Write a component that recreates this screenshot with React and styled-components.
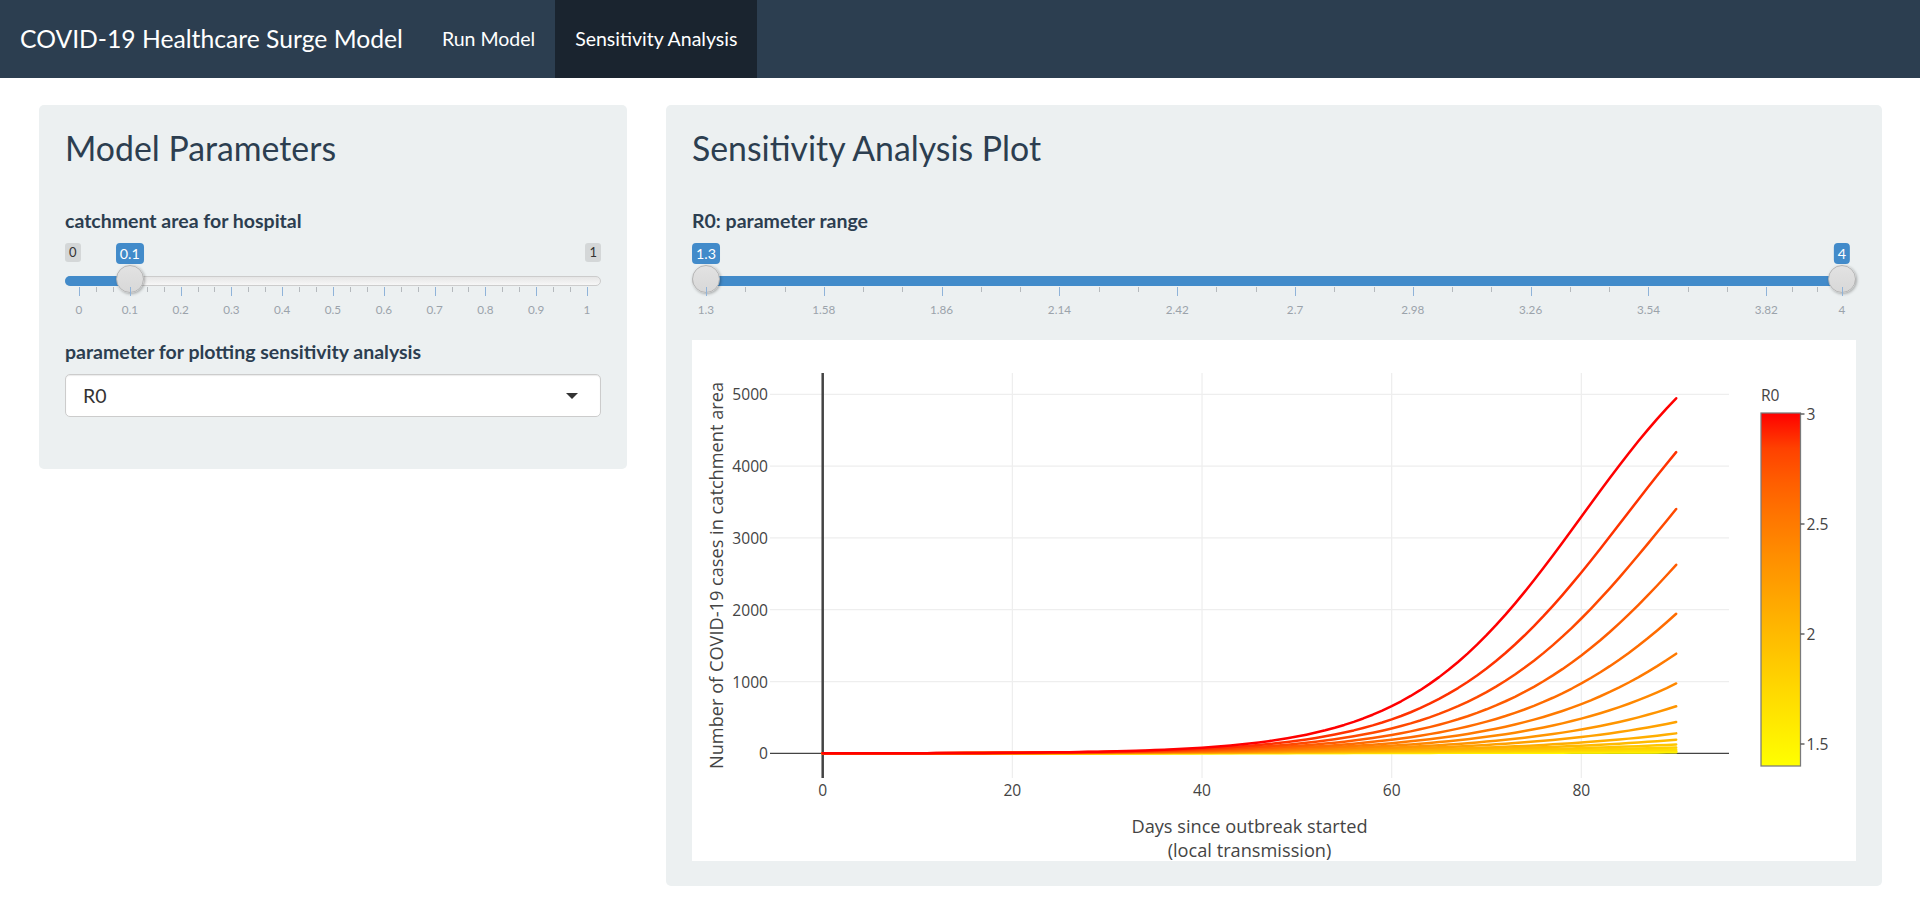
import React from 'react';
import styled, { createGlobalStyle } from 'styled-components';

const GlobalStyle = createGlobalStyle`
  html, body { margin: 0; padding: 0; background: #ffffff; }
  body { font-family: Lato, "Open Sans", "Liberation Sans", sans-serif; color: #2c3e50; font-size: 19.5px; }
  * { box-sizing: border-box; }
`;

/* ---------- colour helpers (CIELAB interpolation like R's colour_ramp) ---------- */
const toLin = (c) => { c /= 255; return c <= 0.04045 ? c / 12.92 : Math.pow((c + 0.055) / 1.055, 2.4); };
const toSrgb = (c) => {
  const v = c <= 0.0031308 ? 12.92 * c : 1.055 * Math.pow(c, 1 / 2.4) - 0.055;
  return Math.round(Math.max(0, Math.min(1, v)) * 255);
};
function rgb2lab([r, g, b]) {
  const R = toLin(r), G = toLin(g), B = toLin(b);
  const X = (0.4124 * R + 0.3576 * G + 0.1805 * B) / 0.95047;
  const Y = 0.2126 * R + 0.7152 * G + 0.0722 * B;
  const Z = (0.0193 * R + 0.1192 * G + 0.9505 * B) / 1.08883;
  const f = (t) => (t > 0.008856 ? Math.cbrt(t) : 7.787 * t + 16 / 116);
  const fx = f(X), fy = f(Y), fz = f(Z);
  return [116 * fy - 16, 500 * (fx - fy), 200 * (fy - fz)];
}
function lab2rgb([L, a, b]) {
  const fy = (L + 16) / 116, fx = fy + a / 500, fz = fy - b / 200;
  const fi = (t) => (t * t * t > 0.008856 ? t * t * t : (t - 16 / 116) / 7.787);
  const X = fi(fx) * 0.95047, Y = fi(fy), Z = fi(fz) * 1.08883;
  const R = 3.2406 * X - 1.5372 * Y - 0.4986 * Z;
  const G = -0.9689 * X + 1.8758 * Y + 0.0415 * Z;
  const B = 0.0557 * X - 0.204 * Y + 1.057 * Z;
  return `rgb(${toSrgb(R)},${toSrgb(G)},${toSrgb(B)})`;
}
const LAB_Y = rgb2lab([255, 255, 0]);
const LAB_R = rgb2lab([255, 0, 0]);
const colorAt = (f) => lab2rgb(LAB_Y.map((c, i) => c + (LAB_R[i] - c) * f));

/* ---------- navbar ---------- */
const Navbar = styled.nav`
  height: 78px;
  background: #2c3e50;
  display: flex;
  align-items: stretch;
`;
const Brand = styled.div`
  padding: 0 19px 0 20px;
  font-size: 24.7px;
  line-height: 78px;
  color: #ffffff;
`;
const NavLink = styled.a`
  display: block;
  padding: 0 20px;
  font-size: 19.5px;
  line-height: 78px;
  color: #ffffff;
  text-decoration: none;
  background: ${(p) => (p.$active ? '#1a242f' : 'transparent')};
`;

/* ---------- layout ---------- */
const Main = styled.main`
  display: grid;
  grid-template-columns: 588px 1216px;
  column-gap: 39px;
  padding: 27px 0 26px 39px;
  align-items: start;
`;
const Well = styled.section`
  display: flex;
  flex-direction: column;
  background: #ecf0f1;
  border-radius: 5px;
  padding: 25px 26px ${(p) => p.$pb}px;
`;
const Title = styled.h2`
  margin: 0 0 40px;
  font-size: 33.8px;
  line-height: 37px;
  font-weight: 400;
  color: #2c3e50;
`;
const Label = styled.div`
  font-weight: 700;
  font-size: 19.5px;
  line-height: 27px;
  color: #2c3e50;
  margin-bottom: ${(p) => p.$mb || 0}px;
`;

/* ---------- range slider ---------- */
const SliderWrap = styled.div`
  display: flex;
  flex-direction: column;
  padding-top: 9px;
  margin-bottom: ${(p) => p.$mb}px;
`;
const LabelRow = styled.div`
  position: relative;
  height: 21px;
  display: flex;
  justify-content: space-between;
  align-items: flex-start;
`;
const TrackRow = styled.div`
  position: relative;
  height: 22px;
  padding-top: 12px;
`;
const GridRow = styled.div`
  position: relative;
  height: 34px;
`;
const Track = styled.div`
  height: 10px;
  border: 1px solid #cccccc;
  border-radius: 16px;
  background: linear-gradient(to bottom, #dedede -50%, #ffffff 150%);
`;
const Bar = styled.div`
  position: absolute;
  top: 12px;
  height: 10px;
  background: #428bca;
  border-radius: ${(p) => (p.$fromEdge ? '16px 0 0 16px' : '0')};
`;
const Handle = styled.div`
  position: absolute;
  top: 1px;
  width: 28px;
  height: 28px;
  margin-left: -14px;
  border-radius: 50%;
  background: linear-gradient(to bottom, #e2e2e2, #d8d8d8);
  border: 1px solid #b4b4b4;
  box-shadow: 1px 1px 3px rgba(0, 0, 0, 0.3);
`;
const EdgeLabel = styled.span`
  height: 19px;
  padding: 0 4px;
  font-size: 13px;
  line-height: 19px;
  color: #333333;
  background: rgba(0, 0, 0, 0.1);
  border-radius: 3px;
`;
const ValueLabel = styled.span`
  position: absolute;
  top: 0;
  height: 21px;
  padding: 0 4px;
  transform: translateX(-50%);
  font-size: 14.3px;
  line-height: 21px;
  color: #ffffff;
  background: #428bca;
  border-radius: 4px;
`;
const Tick = styled.span`
  position: absolute;
  top: 1px;
  width: 1px;
  height: ${(p) => (p.$small ? 5 : 9)}px;
  background: ${(p) => (p.$small ? '#b5b9bd' : '#8fb3d9')};
`;
const TickText = styled.span`
  position: absolute;
  top: 16px;
  transform: translateX(-50%);
  font-size: 11.7px;
  line-height: 14px;
  color: #9ba3ab;
  white-space: nowrap;
`;

const pos = (f) => `calc(14px + (100% - 28px) * ${f})`;

function RangeSlider({ min, max, majors, format, values, showEdges, mb }) {
  const fr = (v) => (v - min) / (max - min);
  const minors = [];
  for (let i = 0; i < majors.length - 1; i++) {
    const a = majors[i], b = majors[i + 1];
    minors.push(a + (b - a) / 3, a + (2 * (b - a)) / 3);
  }
  const single = values.length === 1;
  return (
    <SliderWrap $mb={mb}>
      <LabelRow>
        {showEdges && <EdgeLabel>{format(min)}</EdgeLabel>}
        {showEdges && <EdgeLabel>{format(max)}</EdgeLabel>}
        {values.map((v, i) => (
          <ValueLabel key={'v' + i} style={{ left: pos(fr(v)) }}>{format(v)}</ValueLabel>
        ))}
      </LabelRow>
      <TrackRow>
        <Track />
        {single ? (
          <Bar $fromEdge style={{ left: 0, width: pos(fr(values[0])) }} />
        ) : (
          <Bar style={{ left: pos(fr(values[0])), right: `calc(14px + (100% - 28px) * ${1 - fr(values[1])})` }} />
        )}
        {values.map((v, i) => (
          <Handle key={'h' + i} style={{ left: pos(fr(v)) }} />
        ))}
      </TrackRow>
      <GridRow>
        {minors.map((v, i) => (
          <Tick key={'m' + i} $small style={{ left: pos(fr(v)) }} />
        ))}
        {majors.map((v, i) => (
          <Tick key={'M' + i} style={{ left: pos(fr(v)) }} />
        ))}
        {majors.map((v, i) => (
          <TickText key={'t' + i} style={{ left: pos(fr(v)) }}>{format(v)}</TickText>
        ))}
      </GridRow>
    </SliderWrap>
  );
}

/* ---------- select ---------- */
const SelectBox = styled.div`
  height: 43px;
  background: #ffffff;
  border: 1px solid #cccccc;
  border-radius: 5px;
  box-shadow: inset 0 1px 1px rgba(0, 0, 0, 0.08);
  display: flex;
  align-items: center;
  justify-content: space-between;
  padding: 0 22px 0 17px;
  font-size: 19.5px;
  color: #333333;
`;
const Caret = styled.span`
  width: 0;
  height: 0;
  border-left: 6px solid transparent;
  border-right: 6px solid transparent;
  border-top: 6px solid #333333;
`;

/* ---------- chart ---------- */
const PlotCard = styled.div`
  background: #ffffff;
  height: 521px;
`;
const ChartSvg = styled.svg`
  display: block;
  font-family: "Open Sans", "Liberation Sans", sans-serif;
`;

const CW = 1164, CH = 521;
const PL = 78, PR = 1037, PT = 33, PB = 438;
const xPx = (d) => 130.7 + 9.483 * d;
const yPx = (v) => 413.3 - 0.0718 * v;

/* growth rate per R0 value (1.4 .. 3.0) */
const RATES = [0.0299, 0.0347, 0.0395, 0.0443, 0.0491, 0.0539, 0.0587, 0.0631, 0.0684, 0.0733, 0.0783, 0.0831, 0.0881, 0.0932, 0.0985, 0.104, 0.11];

function SensitivityChart() {
  const K = 6592, L = 8.8;
  const val = (t, r) => K / (1 + Math.exp(L - r * t)) - K / (1 + Math.exp(L));
  const lines = RATES.map((r, i) => {
    const r0 = 1.4 + 0.1 * i;
    let d = '';
    for (let t = 0; t <= 90; t += 1) {
      d += `${t === 0 ? 'M' : 'L'}${xPx(t).toFixed(2)},${yPx(val(t, r)).toFixed(2)}`;
    }
    return { key: i, d, color: colorAt((r0 - 1.4) / 1.6) };
  });
  const stops = Array.from({ length: 11 }, (_, i) => i / 10);
  const cbTop = 73, cbBot = 426, cbX = 1069, cbW = 39.5;
  const cbY = (v) => cbTop + 1 + (3 - v) * 220;

  return (
    <ChartSvg width={CW} height={CH} viewBox={`0 0 ${CW} ${CH}`}>
      <defs>
        <linearGradient id="cbgrad" x1="0" y1="1" x2="0" y2="0">
          {stops.map((s) => (
            <stop key={s} offset={s} stopColor={colorAt(s)} />
          ))}
        </linearGradient>
      </defs>
      {[20, 40, 60, 80].map((d) => (
        <line key={'gx' + d} x1={xPx(d)} x2={xPx(d)} y1={PT} y2={PB} stroke="#eeeeee" strokeWidth="1.25" />
      ))}
      {[1000, 2000, 3000, 4000, 5000].map((v) => (
        <line key={'gy' + v} x1={PL} x2={PR} y1={yPx(v)} y2={yPx(v)} stroke="#eeeeee" strokeWidth="1.25" />
      ))}
      <line x1={PL} x2={PR} y1={yPx(0)} y2={yPx(0)} stroke="#444444" strokeWidth="1.25" />
      <line x1={xPx(0)} x2={xPx(0)} y1={PT} y2={PB} stroke="#444444" strokeWidth="2.5" />
      {lines.map((l) => (
        <path key={l.key} d={l.d} fill="none" stroke={l.color} strokeWidth="2.5" strokeLinejoin="round" strokeLinecap="round" />
      ))}
      {[0, 1000, 2000, 3000, 4000, 5000].map((v) => (
        <text key={'ty' + v} x={76} y={yPx(v)} textAnchor="end" dominantBaseline="central" fontSize="15.6" fill="#444444">
          {v}
        </text>
      ))}
      {[0, 20, 40, 60, 80].map((d) => (
        <text key={'tx' + d} x={xPx(d)} y={450} textAnchor="middle" dominantBaseline="central" fontSize="15.6" fill="#444444">
          {d}
        </text>
      ))}
      <text x={557.5} y={486} textAnchor="middle" dominantBaseline="central" fontSize="18.2" fill="#444444">
        Days since outbreak started
      </text>
      <text x={557.5} y={510} textAnchor="middle" dominantBaseline="central" fontSize="18.2" fill="#444444">
        (local transmission)
      </text>
      <text
        transform={`translate(24,${(PT + PB) / 2}) rotate(-90)`}
        textAnchor="middle"
        dominantBaseline="central"
        fontSize="18.2"
        fill="#444444"
      >
        Number of COVID-19 cases in catchment area
      </text>
      <text x={cbX} y={55} dominantBaseline="central" fontSize="15.6" fill="#444444">R0</text>
      <rect x={cbX} y={cbTop} width={cbW} height={cbBot - cbTop} fill="url(#cbgrad)" stroke="#7a7a7a" strokeWidth="1.25" />
      {[3, 2.5, 2, 1.5].map((v) => (
        <g key={'cb' + v}>
          <line x1={cbX + cbW} x2={cbX + cbW + 4} y1={cbY(v)} y2={cbY(v)} stroke="#444444" strokeWidth="1.25" />
          <text x={cbX + cbW + 6} y={cbY(v)} dominantBaseline="central" fontSize="15.6" fill="#444444">
            {v}
          </text>
        </g>
      ))}
    </ChartSvg>
  );
}

/* ---------- app ---------- */
const fmt1 = (v) => String(+v.toFixed(2));

export default function App() {
  const catchMajors = Array.from({ length: 11 }, (_, i) => +(i / 10).toFixed(1));
  const r0Majors = [...Array.from({ length: 10 }, (_, i) => +(1.3 + 0.28 * i).toFixed(2)), 4];
  return (
    <>
      <GlobalStyle />
      <Navbar>
        <Brand>COVID-19 Healthcare Surge Model</Brand>
        <NavLink href="#">Run Model</NavLink>
        <NavLink href="#" $active>Sensitivity Analysis</NavLink>
      </Navbar>
      <Main>
        <Well $pb={52}>
          <Title>Model Parameters</Title>
          <Label>catchment area for hospital</Label>
          <RangeSlider min={0} max={1} majors={catchMajors} format={fmt1} values={[0.1]} showEdges mb={18} />
          <Label $mb={9}>parameter for plotting sensitivity analysis</Label>
          <SelectBox>
            <span>R0</span>
            <Caret />
          </SelectBox>
        </Well>
        <Well $pb={25}>
          <Title>Sensitivity Analysis Plot</Title>
          <Label>R0: parameter range</Label>
          <RangeSlider min={1.3} max={4} majors={r0Majors} format={fmt1} values={[1.3, 4]} mb={20} />
          <PlotCard>
            <SensitivityChart />
          </PlotCard>
        </Well>
      </Main>
    </>
  );
}
